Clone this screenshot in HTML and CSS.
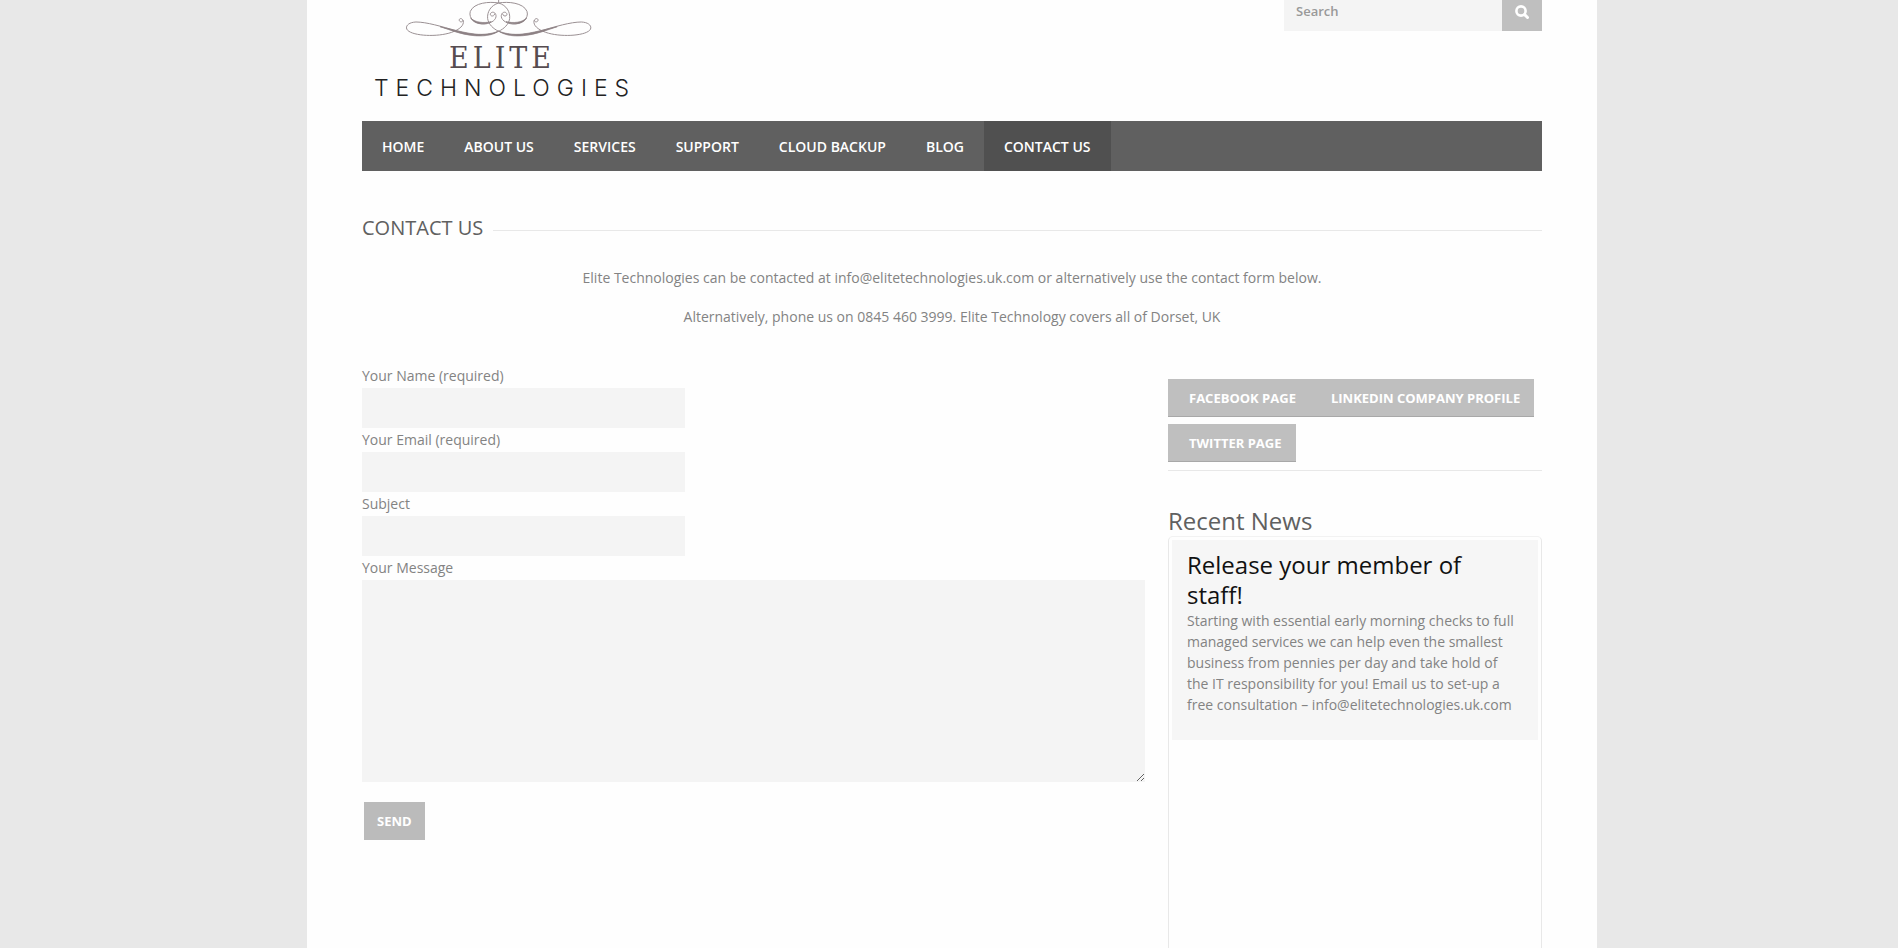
FILE: index.html
```html
<!DOCTYPE html>
<html lang="en">
<head>
  <meta charset="UTF-8">
  <meta name="viewport" content="width=device-width, initial-scale=1.0">
  <title>Contact Us - Elite Technologies</title>
  <link rel="stylesheet" href="styles.css">
</head>
<body>
<div class="page">
  <header class="header">
    <a href="#" class="logo" aria-label="Elite Technologies">
      <svg width="300" height="121" viewBox="0 0 300 121">
        <!-- flourish, left half mirrored to the right -->
        <defs>
          <g id="swirl">
            <path class="thin" d="M446 9C418 4 372 8 361 34C354 56 378 73 404 72C426 70 440 58 438 46C436 34 422 34 421 43C422 51 434 49 434 41"/>
            <path class="thin" d="M446 9C470 16 481 36 479 56C476 74 462 86 446 94"/>
            <path class="thin" d="M446 94C418 108 372 108 318 92C276 80 230 66 198 66C172 67 164 82 173 91C190 108 262 112 305 97C330 88 342 76 340 63C336 52 326 55 328 62C331 68 339 66 339 60"/>
            <path class="thick" d="M362 54C372 72 398 77 424 65C402 70 376 68 362 54Z"/>
            <path class="thick" d="M270 80C330 94 366 104 396 103C420 102 434 98 446 93C426 108 396 109 372 107C334 104 304 91 270 80Z"/>
          </g>
        </defs>
        <g transform="translate(-12 0) scale(0.3333)">
          <use href="#swirl"/>
          <use href="#swirl" transform="translate(892 0) scale(-1 1)"/>
          <path class="thin" d="M446 0V9"/>
        </g>
        <text class="logo-name" x="87" y="68">ELITE</text>
        <text class="logo-sub" x="12" y="96">TECHNOLOGIES</text>
      </svg>
    </a>
    <form class="search">
      <input type="text" placeholder="Search" aria-label="Search">
      <button type="button" aria-label="Search">
        <svg width="14" height="14" viewBox="0 0 14 14">
          <circle cx="6" cy="6" r="4.6" fill="none" stroke="#fff" stroke-width="2.6"/>
          <path d="M9.6 9.6L12.5 12.5" stroke="#fff" stroke-width="3" stroke-linecap="round"/>
        </svg>
      </button>
    </form>
  </header>

  <nav class="nav">
    <a href="#">Home</a>
    <a href="#">About us</a>
    <a href="#">Services</a>
    <a href="#">Support</a>
    <a href="#">Cloud Backup</a>
    <a href="#">Blog</a>
    <a href="#" class="active">Contact Us</a>
  </nav>

  <h1 class="title">Contact Us</h1>

  <div class="intro">
    <p>Elite Technologies can be contacted at info@elitetechnologies.uk.com or alternatively use the contact form below.</p>
    <p>Alternatively, phone us on 0845 460 3999. Elite Technology covers all of Dorset, UK</p>
  </div>

  <div class="content">
    <form class="contact-form">
      <label for="name">Your Name (required)</label>
      <input type="text" id="name">
      <label for="email">Your Email (required)</label>
      <input type="email" id="email">
      <label for="subject">Subject</label>
      <input type="text" id="subject">
      <label for="message">Your Message</label>
      <textarea id="message"></textarea>
      <button type="button" class="send">Send</button>
    </form>

    <aside class="sidebar">
      <div class="social">
        <a href="#">Facebook Page</a><a href="#">LinkedIn Company Profile</a><a href="#">Twitter Page</a>
      </div>
      <h2>Recent News</h2>
      <div class="news">
        <article>
          <h3>Release your member of staff!</h3>
          <p>Starting with essential early morning checks to full managed services we can help even the smallest business from pennies per day and take hold of the IT responsibility for you! Email us to set-up a free consultation – info@elitetechnologies.uk.com</p>
        </article>
      </div>
    </aside>
  </div>
</div>
</body>
</html>
```

FILE: styles.css
```css
* {
  box-sizing: border-box;
}
body {
  margin: 0;
  padding-left: 6px;
  background-color: #e8e8e8;
  color: #838383;
  font-family: "Open Sans", sans-serif;
  font-size: 14px;
  line-height: 21px;
}
h1, h2, h3, p {
  margin: 0;
  font-weight: normal;
}
a {
  text-decoration: none;
}
.page {
  display: flex;
  flex-direction: column;
  max-width: 1290px;
  min-height: 100vh;
  margin: 0 auto;
  padding: 0 55px;
  background-color: #fefefe;
}

/* header */
.header {
  display: flex;
  justify-content: space-between;
  align-items: flex-start;
}
.logo svg {
  display: block;
}
.thin {
  fill: none;
  stroke: #9a9093;
  stroke-width: 3;
}
.thick {
  fill: #8c8084;
  stroke: #8c8084;
  stroke-width: 2;
}
.logo-name {
  font-family: "DejaVu Serif Condensed", "DejaVu Serif", serif;
  font-size: 30px;
  letter-spacing: 4px;
  fill: #564c50;
}
.logo-sub {
  font-family: Inter, "Liberation Sans", sans-serif;
  font-size: 23px;
  font-weight: 300;
  letter-spacing: 7px;
  fill: #222;
}
.search {
  display: flex;
  width: 258px;
  height: 31px;
}
.search input {
  flex: 1;
  min-width: 0;
  padding: 0 12px 10px;
  border: none;
  background-color: #f4f4f4;
  font: 600 13px "Open Sans", sans-serif;
}
.search input::placeholder {
  color: #999;
}
.search button {
  width: 40px;
  padding: 0 0 8px;
  border: none;
  background-color: #bfbfbf;
}
.search svg {
  display: block;
  margin: 0 auto;
}

/* navigation */
.nav {
  display: flex;
  background-color: #606060;
}
.nav a {
  padding: 2px 20px 0;
  color: #fff;
  font-weight: 600;
  line-height: 48px;
  text-transform: uppercase;
}
.nav .active {
  background-color: #505050;
}

.title {
  display: flex;
  align-items: center;
  gap: 10px;
  margin-top: 42px;
  color: #606060;
  font-size: 20px;
  line-height: 30px;
  text-transform: uppercase;
}
.title::after {
  content: "";
  flex: 1;
  height: 1px;
  margin-top: 4px;
  background-color: #e8e8e8;
}
.intro {
  margin-top: 24px;
  text-align: center;
}
.intro p {
  margin-bottom: 18px;
}

/* form */
.content {
  display: flex;
  flex: 1;
  gap: 23px;
  margin-top: 19px;
}
.contact-form {
  flex: 1;
}
.contact-form label {
  display: block;
  line-height: 24px;
}
.contact-form input,
.contact-form textarea {
  display: block;
  padding: 10px;
  border: none;
  border-radius: 0;
  background-color: #f4f4f4;
  font: inherit;
}
.contact-form input {
  width: 323px;
  height: 40px;
}
.contact-form textarea {
  width: 100%;
  height: 202px;
}
.send {
  height: 38px;
  margin: 20px 2px;
  padding: 0 13px;
  border: none;
  background-color: #bbb;
  color: #fff;
  font: bold 13px "Open Sans", sans-serif;
  text-transform: uppercase;
}

/* sidebar */
.sidebar {
  display: flex;
  flex-direction: column;
  width: 374px;
  padding-top: 15px;
}
.social {
  display: flex;
  flex-wrap: wrap;
  row-gap: 7px;
  padding-bottom: 8px;
  border-bottom: 1px solid #e8e8e8;
}
.social a {
  padding: 1px 14px 0 21px;
  border-bottom: 1px solid #a8a8a8;
  background-color: #bfbfbf;
  color: #fff;
  font-size: 13px;
  font-weight: bold;
  line-height: 36px;
  text-transform: uppercase;
}
.sidebar h2 {
  margin-top: 35px;
  color: #606060;
  font-size: 24px;
  line-height: 30px;
}
.news {
  flex: 1;
  padding: 3px;
  border: 1px solid #e8e8e8;
  border-top-color: #f2f2f2;
  border-bottom: none;
  border-radius: 5px 5px 0 0;
}
.news article {
  min-height: 200px;
  padding: 10px 20px 10px 15px;
  background-color: #f6f6f6;
}
.news h3 {
  color: #111;
  font-size: 24px;
  line-height: 30px;
}
```
